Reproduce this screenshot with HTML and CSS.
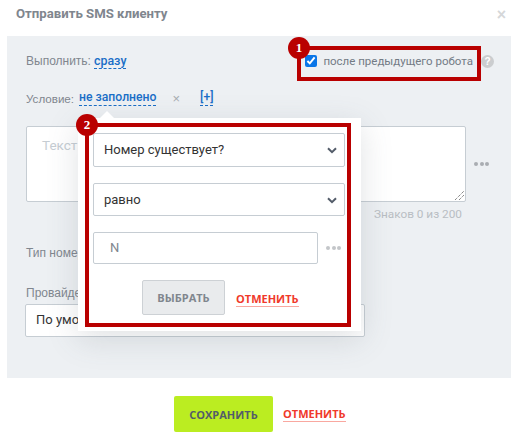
FILE: index.html
```html
<!DOCTYPE html>
<html lang="ru">
<head>
    <meta charset="UTF-8">
    <meta name="viewport" content="width=device-width, initial-scale=1.0">
    <title>Отправить SMS клиенту</title>
    <link rel="stylesheet" href="styles.css">
</head>
<body>
    <div class="modal">
        <div class="modal-head">
            <h2 class="modal-title">Отправить SMS клиенту</h2>
            <span class="modal-close">×</span>
        </div>

        <div class="panel">
            <div class="row row-run">
                <span class="label">Выполнить:</span>
                <a class="link link-run">сразу</a>
                <label class="after-robot">
                    <input type="checkbox" class="after-check" checked>
                    <span>после предыдущего робота</span>
                </label>
                <span class="help">?</span>
            </div>

            <div class="row row-cond">
                <span class="label">Условие:</span>
                <a class="link">не заполнено</a>
                <span class="cond-remove">×</span>
                <a class="link link-add">[+]</a>
            </div>

            <div class="sms-row">
                <div class="textarea">
                    Текст с
                    <svg class="resize" width="9" height="9" viewBox="0 0 9 9">
                        <path d="M0 9 9 0M4 9 9 4" stroke="#555" stroke-width="1" stroke-dasharray="1 1" fill="none"/>
                    </svg>
                </div>
                <div class="dots"><i></i><i></i><i></i></div>
            </div>
            <div class="counter">Знаков 0 из 200</div>

            <div class="field-label field-type">Тип номера</div>
            <div class="field-label field-provider">Провайдер</div>
            <div class="provider">По умолчанию</div>

            <!-- popup with the condition -->
            <div class="popover">
                <div class="select select-first">
                    Номер существует?
                    <svg class="chevron" width="10" height="7" viewBox="0 0 10 7"><path d="M1 1.2 5 5.2l4-4" stroke="#535c69" stroke-width="2" fill="none"/></svg>
                </div>
                <div class="select">
                    равно
                    <svg class="chevron" width="10" height="7" viewBox="0 0 10 7"><path d="M1 1.2 5 5.2l4-4" stroke="#535c69" stroke-width="2" fill="none"/></svg>
                </div>
                <div class="value-row">
                    <div class="value-input">N</div>
                    <div class="dots dots-small"><i></i><i></i><i></i></div>
                </div>
                <div class="popover-actions">
                    <button class="btn-choose">ВЫБРАТЬ</button>
                    <a class="btn-cancel btn-cancel-small">ОТМЕНИТЬ</a>
                </div>
            </div>
        </div>

        <div class="modal-foot">
            <button class="btn-save">СОХРАНИТЬ</button>
            <a class="btn-cancel">ОТМЕНИТЬ</a>
        </div>
    </div>

    <!-- red marks drawn over the screenshot -->
    <div class="mark mark-one"></div>
    <div class="badge badge-one">1</div>
    <div class="mark mark-two"></div>
    <div class="badge badge-two">2</div>
</body>
</html>
```

FILE: styles.css
```css
body {
    margin: 0;
    background: #fff;
    font-family: "Liberation Sans", sans-serif;
    font-size: 12px;
    color: #535c69;
    overflow: hidden;
}

.modal {
    position: relative;
    width: 515px;
    height: 448px;
}

.modal-head {
    display: flex;
    justify-content: space-between;
    height: 36px;
    padding: 0 9px 0 16px;
    box-sizing: border-box;
}

.modal-title {
    margin: 6px 0 0;
    font-family: Roboto, sans-serif;
    font-size: 13.2px;
    line-height: 16px;
    font-weight: 700;
    color: #80868e;
}

.modal-close {
    margin-top: 6px;
    font-size: 16px;
    line-height: 18px;
    font-weight: 700;
    color: #d5d7d9;
}

.panel {
    position: relative;
    width: 504px;
    height: 342px;
    margin-left: 7px;
    padding: 16px 0 0 19px;
    box-sizing: border-box;
    background: #edf0f3;
}

.row {
    display: flex;
    align-items: center;
    height: 18px;
}

.label {
    color: #80868e;
}

.link {
    color: #1a6ec7;
    font-family: Roboto, sans-serif;
    font-size: 12.2px;
    line-height: 15px;
    font-weight: 500;
    border-bottom: 1px dashed #1a6ec7;
}

.link-run {
    margin-left: 3px;
    font-size: 12.4px;
}

.after-robot {
    display: flex;
    align-items: center;
    margin-left: auto;
    margin-right: 38px;
    color: #737b85;
    font-family: Roboto, sans-serif;
    font-size: 11.5px;
}

.after-check {
    width: 12px;
    height: 12px;
    margin: 0 6px 0 0;
    accent-color: #0a76e8;
}

.help {
    position: absolute;
    left: 474px;
    top: 19px;
    width: 13px;
    height: 13px;
    border-radius: 50%;
    background: #cbcdcf;
    color: #fff;
    font-size: 10px;
    line-height: 13px;
    font-weight: 700;
    text-align: center;
}

.row-cond {
    margin-top: 19px;
}

.row-cond .label {
    font-size: 11.6px;
}

.row-cond .link {
    margin-left: 5px;
}

.row-cond .link-add {
    margin-left: 20px;
}

.cond-remove {
    margin-left: 16px;
    color: #a7acb1;
    font-size: 13px;
}

.sms-row {
    display: flex;
    align-items: center;
    margin-top: 19px;
}

.textarea {
    position: relative;
    width: 440px;
    height: 76px;
    padding: 10px 15px;
    box-sizing: border-box;
    background: #fff;
    border: 1px solid #c6cdd3;
    border-radius: 2px;
    color: #c6cdd3;
    font-family: Roboto, sans-serif;
    font-size: 13.5px;
}

.resize {
    position: absolute;
    right: 1px;
    bottom: 1px;
}

.dots {
    display: flex;
    gap: 1.5px;
    margin-left: 8px;
}

.dots i {
    width: 4px;
    height: 4px;
    border-radius: 50%;
    background: #a9adb2;
}

.counter {
    width: 436px;
    margin-top: 4px;
    text-align: right;
    font-family: Roboto, sans-serif;
    font-size: 11.8px;
    line-height: 16px;
    color: #b9bec3;
}

.field-label {
    color: #80868e;
    line-height: 16px;
}

.field-type {
    margin-top: 23px;
}

.field-provider {
    margin-top: 24px;
}

.provider {
    width: 340px;
    height: 33px;
    margin-top: 3px;
    margin-left: -1px;
    padding-left: 10px;
    box-sizing: border-box;
    background: #fff;
    border: 1px solid #c6cdd3;
    border-radius: 2px;
    color: #333;
    font-family: Roboto, sans-serif;
    font-size: 13px;
    line-height: 30px;
}

.popover {
    position: absolute;
    left: 71px;
    top: 82px;
    width: 283px;
    height: 213px;
    padding: 15px 16px 0 15px;
    box-sizing: border-box;
    background: #fff;
    box-shadow: 0 8px 30px rgba(83, 92, 105, 0.18);
}

.popover::before {
    content: "";
    position: absolute;
    left: 22px;
    top: -7px;
    border-left: 7px solid transparent;
    border-right: 7px solid transparent;
    border-bottom: 7px solid #fff;
}

.select {
    position: relative;
    height: 33px;
    margin-top: 16px;
    padding-left: 10px;
    box-sizing: border-box;
    border: 1px solid #c6cdd3;
    border-radius: 2px;
    color: #333;
    font-family: Roboto, sans-serif;
    font-size: 13px;
    line-height: 31px;
}

.select-first {
    height: 34px;
    margin-top: 0;
}

.chevron {
    position: absolute;
    right: 7px;
    top: 13px;
}

.value-row {
    display: flex;
    align-items: center;
    margin-top: 16px;
}

.value-input {
    width: 225px;
    height: 32px;
    padding-left: 16px;
    box-sizing: border-box;
    border: 1px solid #c6cdd3;
    border-radius: 2px;
    color: #80868e;
    font-family: Roboto, sans-serif;
    font-size: 13px;
    line-height: 30px;
}

.dots-small i {
    background: #c3c6c9;
}

.popover-actions {
    display: flex;
    align-items: center;
    gap: 11px;
    margin: 16px 0 0 49px;
}

.btn-choose {
    width: 83px;
    height: 35px;
    padding: 0;
    background: #e9ebed;
    border: 1px solid #cdd1d5;
    border-radius: 2px;
    color: #80868e;
    font-family: "Open Sans", sans-serif;
    font-size: 11px;
    font-weight: 700;
}

.btn-cancel {
    color: #f0392b;
    font-family: "Open Sans", sans-serif;
    font-size: 11px;
    font-weight: 700;
    line-height: 15px;
    border-bottom: 1px solid #f9a8a0;
}

.btn-cancel-small {
    margin-top: 2px;
}

.modal-foot {
    display: flex;
    align-items: center;
    gap: 10px;
    margin: 18px 0 0 174px;
}

.btn-save {
    width: 99px;
    height: 36px;
    padding: 0;
    background: #bbed21;
    border: 0;
    border-radius: 2px;
    color: #535c69;
    font-family: "Open Sans", sans-serif;
    font-size: 11px;
    font-weight: 700;
}

.mark {
    position: absolute;
    box-sizing: border-box;
    border: 4px solid #b90000;
}

.mark-one {
    left: 297px;
    top: 46px;
    width: 184px;
    height: 35px;
}

.mark-two {
    left: 85px;
    top: 123px;
    width: 266px;
    height: 204px;
}

.badge {
    position: absolute;
    width: 22px;
    height: 22px;
    border-radius: 50%;
    background: #b90000;
    color: #fff;
    font-family: "Liberation Serif", serif;
    font-size: 13px;
    font-weight: 700;
    line-height: 22px;
    text-align: center;
}

.badge-one {
    left: 288px;
    top: 37px;
}

.badge-two {
    left: 76px;
    top: 114px;
}
```
